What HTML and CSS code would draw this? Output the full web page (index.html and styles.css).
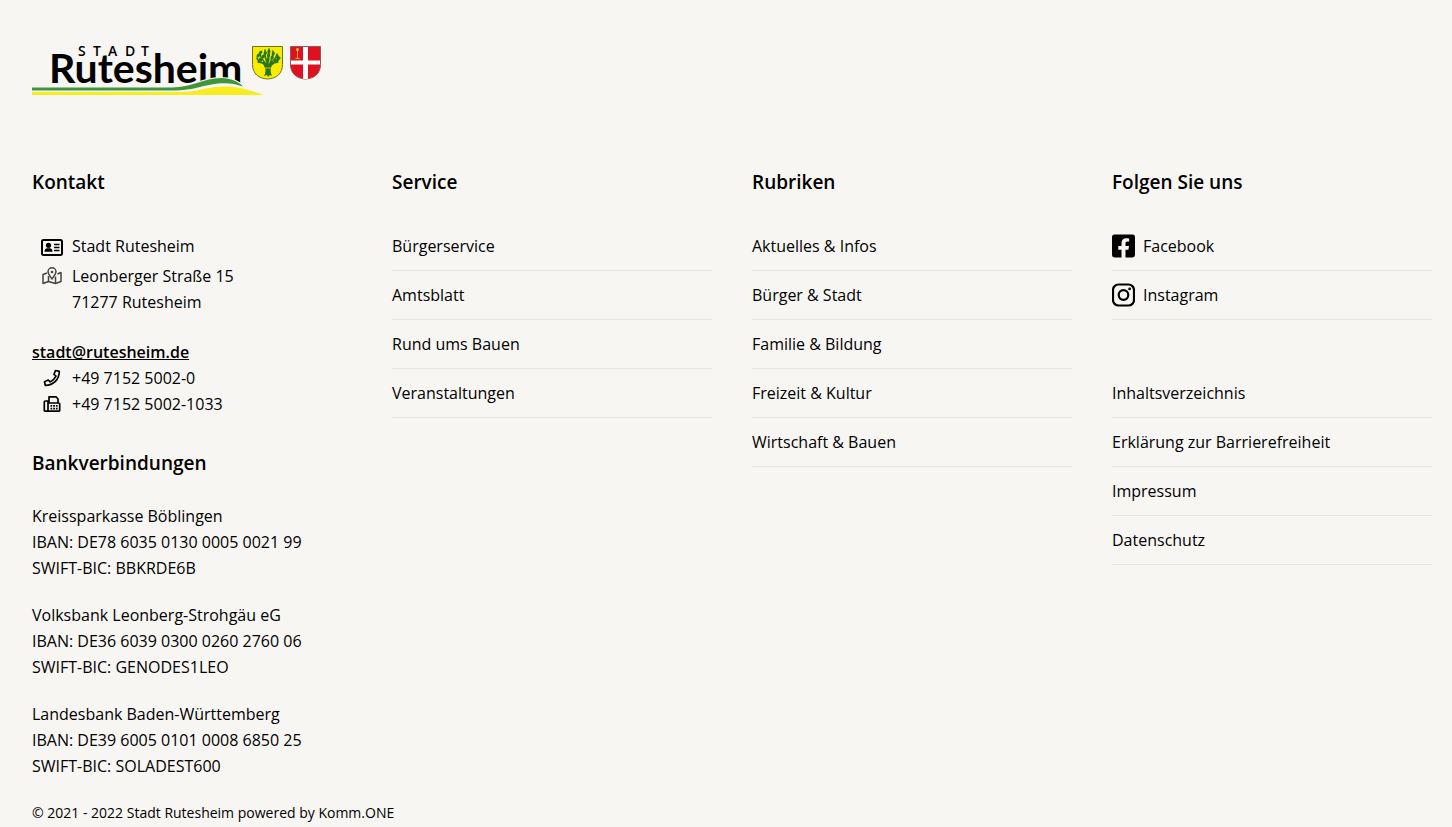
FILE: index.html
```html
<!DOCTYPE html>
<html lang="de">
<head>
    <meta charset="UTF-8">
    <meta name="viewport" content="width=device-width, initial-scale=1.0">
    <title>Stadt Rutesheim</title>
    <link rel="stylesheet" href="styles.css">
</head>
<body>
    <footer class="footer">
        <a class="logo" href="#" aria-label="Stadt Rutesheim">
            <svg width="292" height="60" viewBox="0 0 292 60">
                <text class="logo-name" x="17" y="43">Rutesheim</text>
                <text class="logo-city" y="16"><tspan x="46">S</tspan><tspan x="61">T</tspan><tspan x="76">A</tspan><tspan x="93">D</tspan><tspan x="109">T</tspan></text>
                <!-- Hügel -->
                <path fill="#f8f6f3" d="M142 47C160 46 171 37 188 37c10 0 19 3 24 9l-15 6h-55z"/>
                <path fill="#3f9638" d="M0 47.500h140c20 0 32-9.500 49-9.500 10 0 18 4 22 8.500-8-3-16-4-25-3-14 1.500-25 7-44 7H0z"/>
                <path fill="#f8ed1c" d="M0 52h148c18 0 28-5.500 45-5.500 16 0 27 5 39 8.500H0z"/>
                <!-- Wappen Rutesheim -->
                <path fill="#f9ec00" stroke="#6f721c" d="M220.500 6.500h30v18c0 9-6 14-15 14.500-9-.5-15-5.500-15-14.500z"/>
                <g fill="none" stroke="#27771f" stroke-width="1.500" stroke-linecap="round">
                    <path d="M235 27c-3-5-9-4-10-9M235 26c-3-6-7-7-7-13M236 26c-2-7-4-9-3-16M236 26c0-8 1-9 1-17M237 26c2-7 5-9 4-15M237 26c3-6 8-7 8-12M237 27c4-5 9-4 10-9M232 23c-3-1-5 0-6-1M240 23c3-1 5 0 6-1"/>
                    <path stroke-width="3" stroke-dasharray="1 3" d="M226 16l2-3 3-3M231 17l3-5M236 20l1-9M240 18l2-7M245 17l1-3M229 20l-2-2M243 21l4-3"/>
                </g>
                <path fill="#27771f" d="M231 22l4 3 2-1 4-2-2 6c-1 3 0 5 1 8l-2-1-2 2-1-2-3 1c2-4 2-7 0-10z"/>
                <path stroke="#d7b900" d="M233 28h6"/>
                <!-- Wappen mit Kreuz -->
                <path fill="#df1020" stroke="#8d5a55" d="M258.500 6.500h30v18c0 9-6 14-15 14.500-9-.5-15-5.500-15-14.500z"/>
                <path fill="#fff" d="M271 7h5v31.500q-2.500 1-5 0zM259 20.500h29v4h-29z"/>
                <path fill="none" stroke="#edb92c" d="M265.500 9v9M263.500 18.500h4"/>
                <circle cx="265.500" cy="9.500" r="1.500" fill="#edb92c"/>
            </svg>
        </a>

        <div class="columns">
            <section>
                <h2>Kontakt</h2>
                <div class="contact">
                    <div class="contact-row name">
                        <svg width="22" height="20" viewBox="0 0 22 20">
                            <rect x="1" y="3" width="20" height="15" rx="1.500" fill="none" stroke="#000" stroke-width="2"/>
                            <circle cx="7.500" cy="8.300" r="2.600"/>
                            <path d="M3.500 14.800c0-2.300 1-3.500 2.700-3.500h2.600c1.700 0 2.700 1.200 2.700 3.500z"/>
                            <path d="M13 7.500h5.500M13 10.500h5.500M13 13.500h5.500" stroke="#000" stroke-width="1.500"/>
                        </svg>
                        <span>Stadt Rutesheim</span>
                    </div>
                    <div class="contact-row">
                        <svg width="20" height="18" viewBox="0 0 20 18" fill="none" stroke="#444" stroke-width="1.500" stroke-linejoin="round">
                            <path d="M5 6L1 7.500v9l5.500-2 7 2 5.500-2v-9L15.500 7M6.500 9v5.500M13.500 9.500v7"/>
                            <path d="M10 12C8 9 6 7 6 4.800a4 4 0 0 1 8 0C14 7 12 9 10 12z"/>
                            <circle cx="10" cy="5" r=".6"/>
                        </svg>
                        <address>Leonberger Straße 15<br>71277 Rutesheim</address>
                    </div>
                </div>
                <a class="mail" href="mailto:stadt@rutesheim.de">stadt@rutesheim.de</a>
                <div class="contact-row">
                    <svg width="18" height="18" viewBox="0 0 18 18">
                        <path fill="none" stroke="#000" stroke-width="1.700" stroke-linejoin="round" d="M12.500 1.500l3.800.8C16.300 10.500 10.500 16.300 2.300 16.300l-.8-3.600 3.800-1.700 1.800 2c2.700-1.300 4.600-3.200 5.900-5.900l-2-1.800z"/>
                    </svg>
                    <span>+49 7152 5002-0</span>
                </div>
                <div class="contact-row">
                    <svg width="18" height="18" viewBox="0 0 18 18">
                        <path fill="none" stroke="#000" stroke-width="1.700" stroke-linejoin="round" d="M5 16.200H2.300a1 1 0 0 1-1-1V7a1 1 0 0 1 1-1H5zM5 16.200h10.700a1 1 0 0 0 1-1V9a1 1 0 0 0-1-1H5M6 8V1.800h7L15 4v4"/>
                        <path d="M7.500 10h1.700v1.700H7.500zM10.200 10h1.700v1.700h-1.700zM12.900 10h1.700v1.700h-1.700zM7.500 12.700h1.700v1.700H7.500zM10.200 12.700h1.700v1.700h-1.700zM12.900 12.700h1.700v1.700h-1.700z"/>
                    </svg>
                    <span>+49 7152 5002-1033</span>
                </div>

                <h2 class="bank-title">Bankverbindungen</h2>
                <p>Kreissparkasse Böblingen<br>IBAN: DE78 6035 0130 0005 0021 99<br>SWIFT-BIC: BBKRDE6B</p>
                <p>Volksbank Leonberg-Strohgäu eG<br>IBAN: DE36 6039 0300 0260 2760 06<br>SWIFT-BIC: GENODES1LEO</p>
                <p>Landesbank Baden-Württemberg<br>IBAN: DE39 6005 0101 0008 6850 25<br>SWIFT-BIC: SOLADEST600</p>
            </section>

            <section>
                <h2>Service</h2>
                <ul>
                    <li><a href="#">Bürgerservice</a></li>
                    <li><a href="#">Amtsblatt</a></li>
                    <li><a href="#">Rund ums Bauen</a></li>
                    <li><a href="#">Veranstaltungen</a></li>
                </ul>
            </section>

            <section>
                <h2>Rubriken</h2>
                <ul>
                    <li><a href="#">Aktuelles &amp; Infos</a></li>
                    <li><a href="#">Bürger &amp; Stadt</a></li>
                    <li><a href="#">Familie &amp; Bildung</a></li>
                    <li><a href="#">Freizeit &amp; Kultur</a></li>
                    <li><a href="#">Wirtschaft &amp; Bauen</a></li>
                </ul>
            </section>

            <section>
                <h2>Folgen Sie uns</h2>
                <ul class="social">
                    <li><a href="#">
                        <svg width="23" height="24" viewBox="0 32 448 448"><path d="M400 32H48A48 48 0 0 0 0 80v352a48 48 0 0 0 48 48h137.250V327.690h-63V256h63v-54.640c0-62.150 37-96.480 93.670-96.480 27.140 0 55.520 4.840 55.520 4.840v61h-31.270c-30.810 0-40.420 19.120-40.420 38.730V256h68.780l-11 71.690h-57.780V480H400a48 48 0 0 0 48-48V80a48 48 0 0 0-48-48z"/></svg>
                        Facebook</a></li>
                    <li><a href="#">
                        <svg width="23" height="24" viewBox="0 0 23 23"><rect x="1" y="1" width="21" height="21" rx="5.500" fill="none" stroke="#000" stroke-width="2.200"/><circle cx="11.500" cy="11.500" r="4.800" fill="none" stroke="#000" stroke-width="2.200"/><circle cx="17.600" cy="5.400" r="1.400"/></svg>
                        Instagram</a></li>
                </ul>
                <ul>
                    <li><a href="#">Inhaltsverzeichnis</a></li>
                    <li><a href="#">Erklärung zur Barrierefreiheit</a></li>
                    <li><a href="#">Impressum</a></li>
                    <li><a href="#">Datenschutz</a></li>
                </ul>
            </section>
        </div>

        <div class="copyright">© 2021 - 2022 Stadt Rutesheim powered by <a href="#">Komm.ONE</a></div>
    </footer>
</body>
</html>
```
FILE: styles.css
```css
* {
    box-sizing: border-box;
}
body {
    margin: 0;
    background-color: #f8f6f3;
    color: #000;
    font-family: "Open Sans", sans-serif;
    font-size: 16px;
    line-height: 26px;
}
a {
    color: inherit;
    text-decoration: none;
}
.footer {
    padding: 40px 20px 0 32px;
}
.logo {
    display: block;
    margin-bottom: 69px;
}
.logo svg {
    display: block;
}
.logo-name {
    font-family: Lato, sans-serif;
    font-size: 41px;
    font-weight: 700;
}
.logo-city {
    font-family: "Open Sans", sans-serif;
    font-size: 14px;
    font-weight: 600;
}
.columns {
    display: grid;
    grid-template-columns: repeat(4, 1fr);
    gap: 40px;
}
h2 {
    margin: 0 0 27px;
    font-size: 19px;
    font-weight: 600;
    line-height: 26px;
}
ul {
    margin: 0;
    padding: 0;
    list-style: none;
}
li {
    padding: 11px 0;
    border-bottom: 1px solid #e6e4e1;
}
li a {
    display: block;
}
.social {
    margin-bottom: 49px;
}
.social a {
    display: flex;
    align-items: center;
    gap: 8px;
}
.contact {
    padding: 11px 0 24px;
}
.contact-row {
    display: grid;
    grid-template-columns: 40px 1fr;
}
.contact-row svg {
    justify-self: center;
    margin-top: 4px;
}
.name {
    margin-bottom: 4px;
}
address {
    font-style: normal;
}
.mail {
    display: block;
    font-weight: 600;
    text-decoration: underline;
}
.bank-title {
    margin-top: 33px;
}
p {
    margin: 0 0 21px;
}
.copyright {
    font-size: 14px;
}
```
